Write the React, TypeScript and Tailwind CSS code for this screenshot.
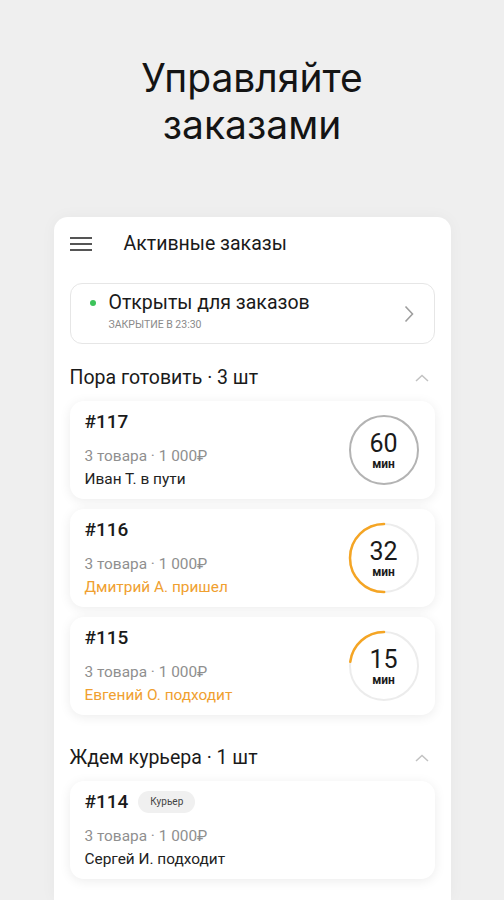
import React from 'react';

type Order = {
  id: string;
  who: string;
  late?: boolean;
  minutes?: number;
  progress?: number;
  badge?: string;
};

const cooking: Order[] = [
  { id: '#117', who: 'Иван Т. в пути', minutes: 60, progress: 1 },
  { id: '#116', who: 'Дмитрий А. пришел', late: true, minutes: 32, progress: 0.5 },
  { id: '#115', who: 'Евгений О. подходит', late: true, minutes: 15, progress: 0.23 },
];

function Timer({ minutes, progress }: { minutes: number; progress: number }) {
  const r = 34;
  const len = 2 * Math.PI * r;
  const full = progress >= 1;
  return (
    <div className="relative w-[72px] h-[72px] shrink-0">
      <svg width="72" height="72" viewBox="0 0 72 72" className="absolute inset-0">
        <circle cx="36" cy="36" r={r} fill="none" stroke={full ? '#b3b3b3' : '#ececec'} strokeWidth="2" />
        {!full && (
          <circle
            cx="36"
            cy="36"
            r={r}
            fill="none"
            stroke="#f5a524"
            strokeWidth="2.5"
            strokeLinecap="round"
            strokeDasharray={`${len * progress} ${len}`}
            transform="translate(72 0) scale(-1 1) rotate(-90 36 36)"
          />
        )}
      </svg>
      <div className="absolute inset-0 flex flex-col items-center justify-center">
        <span className="text-[25px] leading-[26px] text-[#1a1a1a] mt-[2px]">{minutes}</span>
        <span className="text-[12px] leading-[14px] font-bold text-[#1a1a1a]">мин</span>
      </div>
    </div>
  );
}

function OrderCard({ o }: { o: Order }) {
  return (
    <div className="flex items-center justify-between h-[98px] rounded-[14px] bg-white shadow-[0_2px_12px_rgba(0,0,0,0.08)] pl-[15px] pr-[15px]">
      <div className="flex flex-col h-full pt-[10px]">
        <div className="flex items-center gap-[10px] h-[22px]">
          <span className="text-[19px] leading-[22px] font-medium text-[#1a1a1a]">{o.id}</span>
          {o.badge && (
            <span className="h-[22px] px-[12px] rounded-full bg-[#f0f0f0] text-[10px] leading-[22px] text-[#444]">{o.badge}</span>
          )}
        </div>
        <span className="mt-[12px] text-[15.4px] leading-[23px] text-[#8f8f8f]">3 товара · 1 000₽</span>
        <span className={`text-[15.4px] leading-[23px] ${o.late ? 'text-[#f0a030]' : 'text-[#222]'}`}>{o.who}</span>
      </div>
      {o.minutes !== undefined && <Timer minutes={o.minutes} progress={o.progress ?? 1} />}
    </div>
  );
}

function SectionHead({ title }: { title: string }) {
  return (
    <div className="flex items-center justify-between h-[34px]">
      <span className="text-[19.5px] text-[#1a1a1a]">{title}</span>
      <svg width="14" height="8" viewBox="0 0 14 8" className="mr-[6px]">
        <path d="M1 7 L7 1.5 L13 7" fill="none" stroke="#c2c2c2" strokeWidth="1.5" />
      </svg>
    </div>
  );
}

export default function App() {
  return (
    <div className="w-full h-[900px] bg-[#efefef] overflow-hidden flex flex-col items-center" style={{ fontFamily: 'Roboto, "Noto Sans", sans-serif' }}>
      <h1
        className="pt-[54px] text-center text-[39px] leading-[47px] text-[#141414] font-normal"
        style={{ fontFamily: 'Inter, "Noto Sans", sans-serif' }}
      >
        Управляйте
        <br />
        заказами
      </h1>

      <div className="mt-[69px] w-[397px] flex-1 bg-white rounded-t-[14px] shadow-[0_0_16px_rgba(0,0,0,0.04)] px-[16px]">
        <div className="flex items-center h-[54px]">
          <div className="flex flex-col gap-[4px] w-[22px]">
            <span className="h-[2px] bg-[#555]" />
            <span className="h-[2px] bg-[#555]" />
            <span className="h-[2px] bg-[#555]" />
          </div>
          <span className="ml-[32px] text-[19.5px] text-[#1a1a1a]">Активные заказы</span>
        </div>

        <div className="mt-[12px] h-[61px] rounded-[12px] border border-[#e6e6e6] flex items-center justify-between pl-[19px] pr-[20px]">
          <div className="flex h-full">
            <span className="mt-[16px] w-[6px] h-[6px] rounded-full bg-[#3cc35a]" />
            <div className="flex flex-col ml-[13px] pt-[7px]">
              <span className="text-[19.5px] leading-[23px] text-[#1a1a1a]">Открыты для заказов</span>
              <span className="mt-[4px] text-[10.5px] leading-[13px] text-[#8a8a8a] uppercase">Закрытие в 23:30</span>
            </div>
          </div>
          <svg width="10" height="18" viewBox="0 0 10 18">
            <path d="M1.5 1.5 L8.5 9 L1.5 16.5" fill="none" stroke="#9e9e9e" strokeWidth="1.6" />
          </svg>
        </div>

        <div className="mt-[17px]">
          <SectionHead title="Пора готовить · 3 шт" />
        </div>
        <div className="mt-[6px] flex flex-col gap-[10px]">
          {cooking.map((o) => (
            <OrderCard key={o.id} o={o} />
          ))}
        </div>

        <div className="mt-[26px]">
          <SectionHead title="Ждем курьера · 1 шт" />
        </div>
        <div className="mt-[6px]">
          <OrderCard o={{ id: '#114', who: 'Сергей И. подходит', badge: 'Курьер' }} />
        </div>
      </div>
    </div>
  );
}
